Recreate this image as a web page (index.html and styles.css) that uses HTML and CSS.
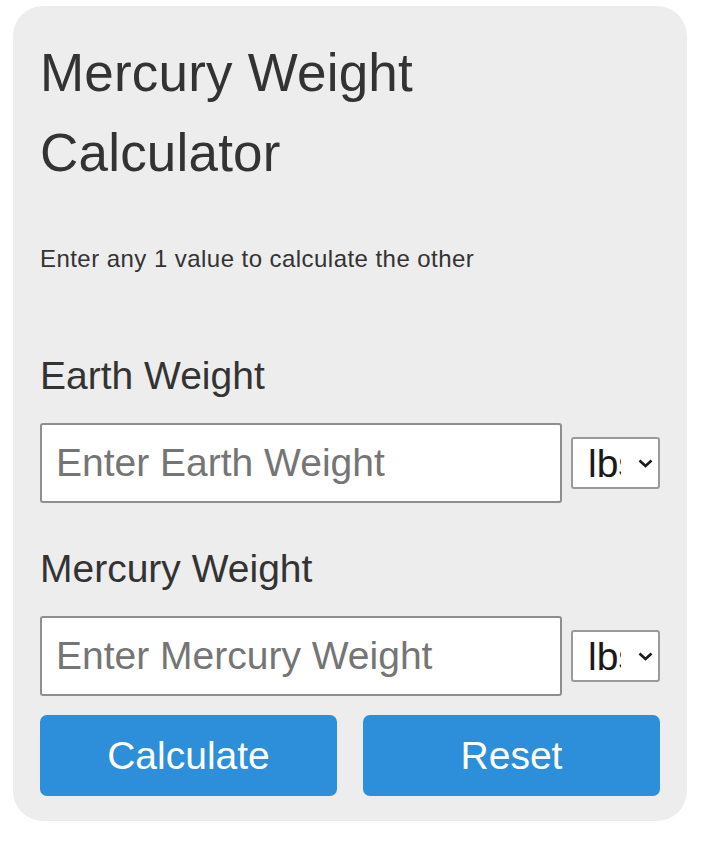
FILE: index.html
```html
<!DOCTYPE html>
<html lang="en">
<head>
    <meta charset="UTF-8">
    <meta name="viewport" content="width=device-width, initial-scale=1.0">
    <title>Mercury Weight Calculator</title>
    <link rel="stylesheet" href="styles.css">
</head>
<body>
    <div class="calculator">
        <h1>Mercury Weight Calculator</h1>
        <p class="hint">Enter any 1 value to calculate the other</p>

        <div class="field">
            <label for="earthWeight">Earth Weight</label>
            <div class="row">
                <input type="number" id="earthWeight" placeholder="Enter Earth Weight">
                <div class="unit">
                    <select id="earthUnit">
                        <option>lbs</option>
                        <option>kg</option>
                    </select>
                    <svg class="arrow" width="15" height="9" viewBox="0 0 15 9"><path d="M1.5 1.5 L7.5 7 L13.5 1.5" fill="none" stroke="#1a1a1a" stroke-width="2.6"/></svg>
                </div>
            </div>
        </div>

        <div class="field">
            <label for="mercuryWeight">Mercury Weight</label>
            <div class="row">
                <input type="number" id="mercuryWeight" placeholder="Enter Mercury Weight">
                <div class="unit">
                    <select id="mercuryUnit">
                        <option>lbs</option>
                        <option>kg</option>
                    </select>
                    <svg class="arrow" width="15" height="9" viewBox="0 0 15 9"><path d="M1.5 1.5 L7.5 7 L13.5 1.5" fill="none" stroke="#1a1a1a" stroke-width="2.6"/></svg>
                </div>
            </div>
        </div>

        <div class="buttons">
            <button class="btn">Calculate</button>
            <button class="btn">Reset</button>
        </div>
    </div>
</body>
</html>
```

FILE: styles.css
```css
body {
    font-family: "Liberation Sans", Arial, sans-serif;
    margin: 0;
    background-color: #fff;
    color: #333;
}
.calculator {
    width: 674px;
    box-sizing: border-box;
    margin: 6px 0 0 13px;
    padding: 27px 27px 25px;
    background: #ededed;
    border-radius: 30px;
}
h1 {
    margin: 0;
    max-width: 520px;
    font-size: 53px;
    font-weight: normal;
    line-height: 80px;
    letter-spacing: 0.2px;
    color: #333;
}
.hint {
    margin: 52px 0 0;
    font-size: 24px;
    line-height: 28px;
    letter-spacing: 0.45px;
}
.field {
    margin-top: 80px;
}
.field + .field {
    margin-top: 43px;
}
label {
    display: block;
    margin-bottom: 25px;
    font-size: 39px;
    line-height: 45px;
}
.row {
    display: flex;
    align-items: center;
    gap: 9px;
}
input {
    flex: 1;
    min-width: 0;
    height: 80px;
    box-sizing: border-box;
    padding: 0 14px;
    border: 2px solid #8e8e8e;
    border-radius: 3px;
    background: #fff;
    font-family: inherit;
    font-size: 39px;
    color: #222;
}
input::placeholder {
    color: #757575;
}
.unit {
    position: relative;
    flex: none;
}
select {
    appearance: none;
    display: block;
    width: 89px;
    height: 52px;
    box-sizing: border-box;
    padding: 0 37px 0 15px;
    border: 2px solid #9a9a9a;
    border-radius: 3px;
    background: #fff;
    font-family: inherit;
    font-size: 39px;
    color: #1a1a1a;
}
.arrow {
    position: absolute;
    right: 7px;
    top: 22px;
    pointer-events: none;
}
.buttons {
    display: grid;
    grid-template-columns: 1fr 1fr;
    gap: 26px;
    margin-top: 19px;
}
.btn {
    height: 81px;
    border: none;
    border-radius: 7px;
    background: #2d8fd9;
    color: #fff;
    font-family: inherit;
    font-size: 39px;
    cursor: pointer;
}
```
